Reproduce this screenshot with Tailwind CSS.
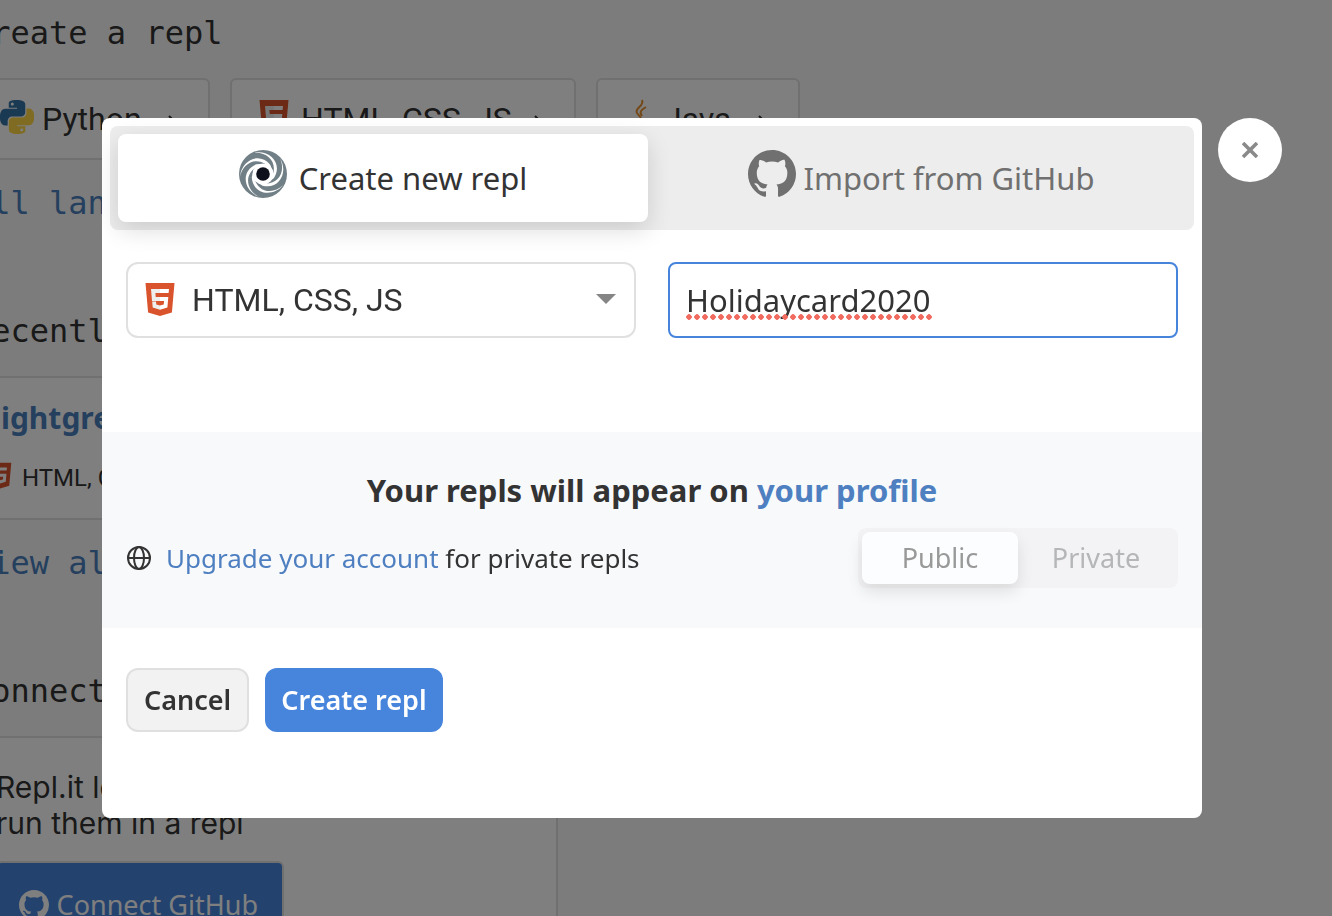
<!DOCTYPE html>
<html lang="en">
<head>
<meta charset="utf-8">
<meta name="viewport" content="width=device-width, initial-scale=1">
<title>Create a repl</title>
<script src="https://cdn.jsdelivr.net/npm/@tailwindcss/browser@4"></script>
</head>
<body class="h-screen overflow-hidden bg-[#f8f8f8] font-['Noto_Sans',sans-serif] text-[#333]">

<svg class="hidden" aria-hidden="true">
  <symbol id="github" viewBox="0 0 16 16"><path fill="currentColor" d="M8 0C3.58 0 0 3.58 0 8c0 3.54 2.29 6.53 5.47 7.59.4.07.55-.17.55-.38 0-.19-.01-.82-.01-1.49-2.01.37-2.53-.49-2.69-.94-.09-.23-.48-.94-.82-1.13-.28-.15-.68-.52-.01-.53.63-.01 1.08.58 1.23.82.72 1.21 1.87.87 2.33.66.07-.52.28-.87.51-1.07-1.78-.2-3.64-.89-3.64-3.95 0-.87.31-1.59.82-2.15-.08-.2-.36-1.02.08-2.12 0 0 .67-.21 2.2.82.64-.18 1.32-.27 2-.27s1.36.09 2 .27c1.53-1.04 2.2-.82 2.2-.82.44 1.1.16 1.92.08 2.12.51.56.82 1.27.82 2.15 0 3.07-1.87 3.75-3.65 3.95.29.25.54.73.54 1.48 0 1.07-.01 1.93-.01 2.2 0 .21.15.46.55.38A8.01 8.01 0 0 0 16 8c0-4.42-3.58-8-8-8z"/></symbol>
  <symbol id="html5" viewBox="0 0 32 36"><path fill="#d9532c" d="M1.500 1h29l-2.600 29.500L16 34 4.100 30.500z"/><path fill="#eee" d="M16 7H7l1 12h8v-4h-4.300l-.3-4H16zM16 23.400l-3.700-1-.3-2.900H8.200l.5 6L16 27.700z"/><path fill="#fff" d="M16 7h9l-.4 4H16zM16 15h8.300l-.9 10.500L16 27.700v-4.300l3.700-1 .4-3.400H16z"/></symbol>
  <symbol id="python" viewBox="0 0 24 24"><path fill="#3572a5" d="M14.250.18l.9.2.73.26.59.3.45.32.34.34.25.34.16.33.1.3.04.26.02.2-.01.13V8.500l-.05.63-.13.55-.21.46-.26.38-.3.31-.33.25-.35.19-.35.14-.33.1-.3.07-.26.04-.21.02H8.770l-.69.05-.59.14-.5.22-.41.27-.33.32-.27.35-.2.36-.15.37-.1.35-.07.32-.04.27-.02.21v3.060H3.170l-.21-.03-.28-.07-.32-.12-.35-.18-.36-.26-.36-.36-.35-.46-.32-.59-.28-.73-.21-.88-.14-1.050-.05-1.230.06-1.220.16-1.040.24-.87.32-.71.36-.57.4-.44.42-.33.42-.24.4-.16.36-.1.32-.05.24-.01h.16l.06.01h8.160v-.83H6.180l-.01-2.750-.02-.37.05-.34.11-.31.17-.28.25-.26.31-.23.38-.2.44-.18.51-.15.58-.12.64-.1.71-.06.77-.04.84-.02 1.270.05zm-6.300 1.980l-.23.33-.08.41.08.41.23.34.33.22.41.09.41-.09.33-.22.23-.34.08-.41-.08-.41-.23-.33-.33-.22-.41-.09-.41.09z"/><path fill="#ffd845" d="M21.100 6.110l.28.06.32.12.35.18.36.27.36.35.35.47.32.59.28.73.21.88.14 1.040.05 1.230-.06 1.230-.16 1.040-.24.86-.32.71-.36.57-.4.45-.42.33-.42.24-.4.16-.36.09-.32.05-.24.02-.16-.01h-8.220v.82h5.840l.01 2.760.02.36-.05.34-.11.31-.17.29-.25.25-.31.24-.38.2-.44.17-.51.15-.58.13-.64.09-.71.07-.77.04-.84.01-1.270-.04-1.070-.14-.9-.2-.73-.25-.59-.3-.45-.33-.34-.34-.25-.34-.16-.33-.1-.3-.04-.25-.02-.2.01-.13v-5.340l.05-.64.13-.54.21-.46.26-.38.3-.32.33-.24.35-.2.35-.14.33-.1.3-.06.26-.04.21-.02.13-.01h5.840l.69-.05.59-.14.5-.21.41-.28.33-.32.27-.35.2-.36.15-.36.1-.35.07-.32.04-.28.02-.21V6.070h2.090l.14.01zm-6.470 14.250l-.23.33-.08.41.08.41.23.33.33.23.41.08.41-.08.33-.23.23-.33.08-.41-.08-.41-.23-.33-.33-.23-.41-.08-.41.08z"/></symbol>
  <symbol id="arrow" viewBox="0 0 20 20"><path d="M0 12h12M7 7l5 5-5 5" fill="none" stroke="currentColor" stroke-width="2"/></symbol>
</svg>

<main class="-ml-7 h-full overflow-hidden pt-[13px]">
  <h2 class="font-['DejaVu_Sans_Mono',monospace] text-[32px] leading-10">Create a repl</h2>
  <div class="mt-[25px] flex gap-5 font-['Roboto',sans-serif] text-[32px] leading-10">
    <button class="flex h-[82px] w-[238px] items-center gap-2 rounded-md border-2 border-[#e0e0e0] bg-white pl-[26px]"><svg class="mb-1 size-[34px] shrink-0"><use href="#python"/></svg>Python<svg class="ml-3 size-5"><use href="#arrow"/></svg></button>
    <button class="flex h-[82px] w-[346px] items-center gap-2 rounded-md border-2 border-[#e0e0e0] bg-white pl-[26px]"><svg class="mr-[3px] mb-1 h-9 w-8 shrink-0"><use href="#html5"/></svg>HTML, CSS, JS<svg class="ml-2 size-5"><use href="#arrow"/></svg></button>
    <button class="flex h-[82px] w-[204px] items-center gap-2 rounded-md border-2 border-[#e0e0e0] bg-white pl-[26px]"><svg class="mb-1 h-9 w-8 shrink-0" viewBox="0 0 32 36" fill="none" stroke-width="2"><path stroke="#e8902c" d="M18 1c3 6-8 8-5 13l4 5M22 8c-5 3-7 5-4 9"/><path stroke="#4d7896" d="M9 21c-6 3 11 4 15 1M11 26c2 2 7 2 11 0M8 31c5 3 14 2 17-1"/></svg>Java<svg class="ml-3 size-5"><use href="#arrow"/></svg></button>
  </div>
  <a href="#" class="mt-[23px] block font-['DejaVu_Sans_Mono',monospace] text-[32px] leading-10 text-[#4b7fbd]">All languages</a>
  <h2 class="mt-[88px] font-['DejaVu_Sans_Mono',monospace] text-[32px] leading-10">Recently</h2>
  <section class="mt-[25px] h-36 w-[586px] border-2 border-[#e0e0e0] bg-white pt-5">
    <a href="#" class="block pl-[18px] text-[30px] leading-10 font-bold text-[#4b7fbd]">lightgreen</a>
    <p class="mt-5 flex items-center gap-2 pl-3 font-['Roboto',sans-serif] text-2xl leading-10"><svg class="mb-1 h-7 w-7"><use href="#html5"/></svg>HTML, CSS, JS</p>
  </section>
  <a href="#" class="mt-[23px] block font-['DejaVu_Sans_Mono',monospace] text-[32px] leading-10 text-[#4b7fbd]">View all</a>
  <h2 class="mt-[88px] font-['DejaVu_Sans_Mono',monospace] text-[32px] leading-10">Connect</h2>
  <section class="mt-[25px] h-60 w-[586px] border-2 border-[#e0e0e0] bg-white pt-[31px] pl-[22px] font-['Inter',sans-serif]">
    <p class="text-[30px] leading-9">Repl.it loves GitHub,<br>run them in a repl</p>
    <button class="mt-5 flex h-[88px] w-[288px] items-center justify-end gap-2 rounded-md border-2 border-[#e0e0e0] bg-[#4785dc] pr-6 font-['Noto_Sans',sans-serif] text-[27px] text-white"><svg class="size-[30px]"><use href="#github"/></svg>Connect GitHub</button>
  </section>
</main>

<div class="fixed inset-0 flex items-start gap-4 bg-black/50 pt-[118px] pr-[50px] pl-[102px]">
  <div role="dialog" aria-label="Create new repl" class="min-w-0 flex-1 rounded-lg bg-white pb-[86px]">
    <div class="p-2 pb-0">
      <div class="flex gap-2 rounded-lg bg-[#ededed] p-2 text-[31px] leading-10">
        <button class="flex h-[88px] flex-1 items-center justify-center gap-3 rounded-lg bg-white shadow-[0_8px_24px_rgba(0,0,0,0.14)]">
          <svg class="mb-2 size-12" viewBox="0 0 48 48"><circle cx="24" cy="24" r="24" fill="#717f86"/><circle cx="24" cy="24" r="10.500" fill="#fff"/><g fill="#fff"><path id="arm" d="M14 3C31-1 44 14 35 28L30 32C42 15 30 1 14 3z"/><use href="#arm" transform="rotate(72 24 24)"/><use href="#arm" transform="rotate(144 24 24)"/><use href="#arm" transform="rotate(216 24 24)"/><use href="#arm" transform="rotate(288 24 24)"/></g><circle cx="24" cy="24" r="6.800" fill="#0e101c"/></svg>
          Create new repl
        </button>
        <button class="flex h-[88px] flex-1 items-center justify-center gap-2 rounded-lg text-[#707070]">
          <svg class="mb-2 size-12"><use href="#github"/></svg>
          Import from GitHub
        </button>
      </div>
    </div>
    <div class="grid grid-cols-2 gap-8 px-6 pt-8 text-[31px]">
      <div class="relative">
        <select aria-label="Language" class="h-[76px] w-full appearance-none rounded-xl border-2 border-[#e0e0e0] bg-white pl-16 font-['Roboto',sans-serif] text-[32px] text-[#333]"><option>HTML, CSS, JS</option></select>
        <svg class="pointer-events-none absolute top-5 left-4 h-9 w-9" viewBox="0 0 36 36"><use href="#html5"/></svg>
        <svg class="pointer-events-none absolute top-8 right-5 h-[10px] w-5" viewBox="0 0 20 10"><path fill="#858585" d="M0 0h20L10 10z"/></svg>
      </div>
      <div class="relative">
        <input aria-label="Repl name" spellcheck="false" value="Holidaycard2020" class="h-[76px] w-full rounded-lg border-2 border-[#4785dc] bg-white px-4 text-[#333] outline-none">
        <span class="pointer-events-none absolute top-[52px] left-[17px] h-[6px] w-[248px] bg-[radial-gradient(circle_at_center,#f26b60_2.500px,transparent_3px)] bg-[size:8px_6px]"></span>
      </div>
    </div>
    <div class="mt-[94px] bg-[#f8f9fb] px-6 pt-[38px] pb-10">
      <h3 class="text-center text-[31px] leading-10 font-bold">Your repls will appear on <a href="#" class="text-[#4e7fc0]">your profile</a></h3>
      <div class="mt-[18px] flex items-center justify-between text-[27px]">
        <p class="flex items-center gap-[14px] text-[26px]">
          <svg class="size-[26px]" viewBox="0 0 26 26" fill="none" stroke="currentColor" stroke-width="2"><circle cx="13" cy="13" r="11"/><ellipse cx="13" cy="13" rx="5" ry="11"/><path d="M2 13h22"/></svg>
          <span><a href="#" class="text-[#4e7fc0]">Upgrade your account</a> for private repls</span>
        </p>
        <div class="flex rounded-lg bg-[#f3f3f5] p-1">
          <button class="h-[52px] w-[156px] rounded-lg bg-[#fcfdfe] text-[#999] shadow-[0_8px_16px_rgba(0,0,0,0.1)]">Public</button>
          <button class="h-[52px] w-[156px] text-[#b5b6b7]">Private</button>
        </div>
      </div>
    </div>
    <div class="flex gap-4 px-6 pt-10 text-[27px] font-semibold">
      <button class="h-16 rounded-xl border-2 border-[#e0e0e0] bg-[#f2f2f2] px-4">Cancel</button>
      <button class="h-16 rounded-xl bg-[#4785dc] px-4 text-white">Create repl</button>
    </div>
  </div>
  <button aria-label="Close" class="flex size-16 items-center justify-center rounded-full bg-white"><svg class="size-4" viewBox="0 0 16 16"><path d="M1 1l14 14M15 1L1 15" stroke="#8a8a8a" stroke-width="3.600"/></svg></button>
</div>
</body>
</html>
